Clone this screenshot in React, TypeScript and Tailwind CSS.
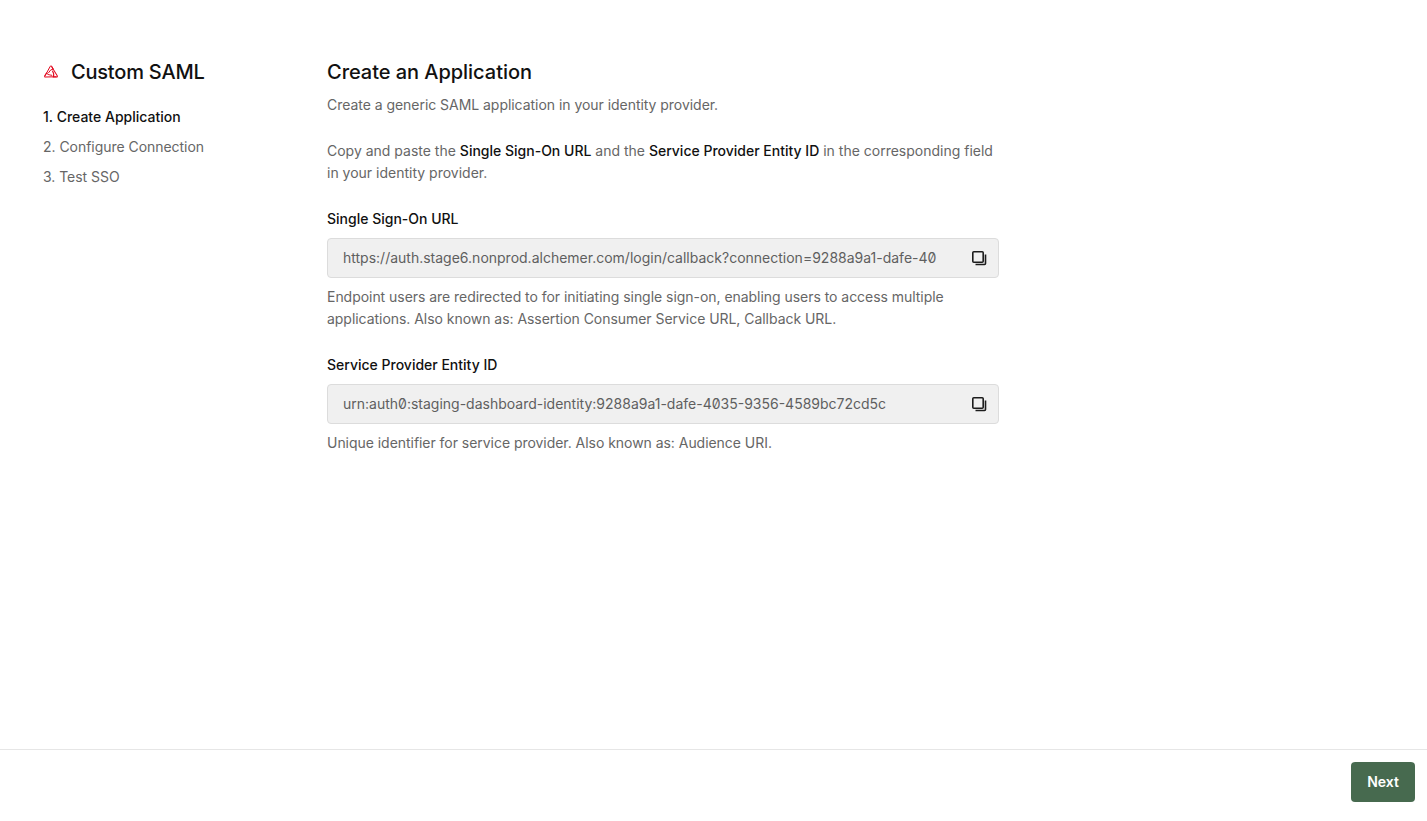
function CopyIcon() {
  return (
    <svg width="16" height="16" viewBox="0 0 16 16" fill="none" className="shrink-0 text-[#1c1c1c]">
      <rect x="1.8" y="1.8" width="10.4" height="10.4" rx="1" stroke="currentColor" strokeWidth="1.6" />
      <path d="M14.5 4.5V13.5a1 1 0 0 1-1 1H4.5" stroke="currentColor" strokeWidth="1.6" />
    </svg>
  );
}

function Logo() {
  const blade = "M2.2 11.6 7.3 2.2Q8 1.2 8.7 2.2L10.2 5Q7.4 5.2 5.6 8.6";
  return (
    <svg width="16" height="16" viewBox="0 0 16 16" fill="none" stroke="#e2061c" strokeWidth="1" strokeLinecap="round">
      <path d={blade} />
      <path d={blade} transform="rotate(120 8 9)" />
      <path d={blade} transform="rotate(240 8 9)" />
    </svg>
  );
}

function Field({ value }: { value: string }) {
  return (
    <div className="flex h-10 w-[672px] items-center rounded border border-[#dcdcdc] bg-[#f0f0f0] pl-[15px] pr-[11px]">
      <span className="flex-1 overflow-hidden whitespace-nowrap text-sm slashed-zero tracking-normal text-[#5f5f5f]">{value}</span>
      <CopyIcon />
    </div>
  );
}

export default function App() {
  return (
    <div className="flex h-[821px] w-full flex-col bg-white font-['Inter',sans-serif] text-sm tracking-[-0.04px] text-[#666666]">
      <main className="flex flex-1 px-[43px] pt-[59px]">
        <aside className="w-[284px] shrink-0">
          <div className="flex h-[26px] items-center gap-3">
            <Logo />
            <h2 className="text-xl tracking-[-0.2px] font-medium text-[#111111]">Custom SAML</h2>
          </div>
          <ol className="mt-[21px] flex flex-col gap-2">
            <li className="h-[22px] leading-[22px] font-medium tracking-normal text-[#111111]">1. Create Application</li>
            <li className="h-[22px] leading-[22px]">2. Configure Connection</li>
            <li className="h-[22px] leading-[22px]">3. Test SSO</li>
          </ol>
        </aside>
        <section className="w-[672px]">
          <h1 className="h-[26px] text-xl leading-[26px] font-medium text-[#111111]">Create an Application</h1>
          <p className="mt-[9px] leading-[22px]">Create a generic SAML application in your identity provider.</p>
          <p className="mt-[24px] leading-[22px] tracking-normal">
            Copy and paste the <span className="font-medium text-[#111111]">Single Sign-On URL</span> and the{" "}
            <span className="font-medium text-[#111111]">Service Provider Entity ID</span> in the corresponding field in your identity provider.
          </p>
          <div className="mt-[24px] h-[22px] leading-[22px] font-medium tracking-normal text-[#111111]">Single Sign-On URL</div>
          <div className="mt-2">
            <Field value="https://auth.stage6.nonprod.alchemer.com/login/callback?connection=9288a9a1-dafe-40" />
          </div>
          <p className="mt-2 leading-[22px]">
            Endpoint users are redirected to for initiating single sign-on, enabling users to access multiple applications. Also known as: Assertion Consumer Service URL, Callback URL.
          </p>
          <div className="mt-6 h-[22px] leading-[22px] font-medium tracking-normal text-[#111111]">Service Provider Entity ID</div>
          <div className="mt-2">
            <Field value="urn:auth0:staging-dashboard-identity:9288a9a1-dafe-4035-9356-4589bc72cd5c" />
          </div>
          <p className="mt-2 leading-[22px]">Unique identifier for service provider. Also known as: Audience URI.</p>
        </section>
      </main>
      <footer className="flex h-[72px] items-start justify-end border-t border-[#e6e6e6] pr-3 pt-3">
        <button className="h-10 w-16 rounded bg-[#476a4f] text-sm font-semibold text-white">Next</button>
      </footer>
    </div>
  );
}
